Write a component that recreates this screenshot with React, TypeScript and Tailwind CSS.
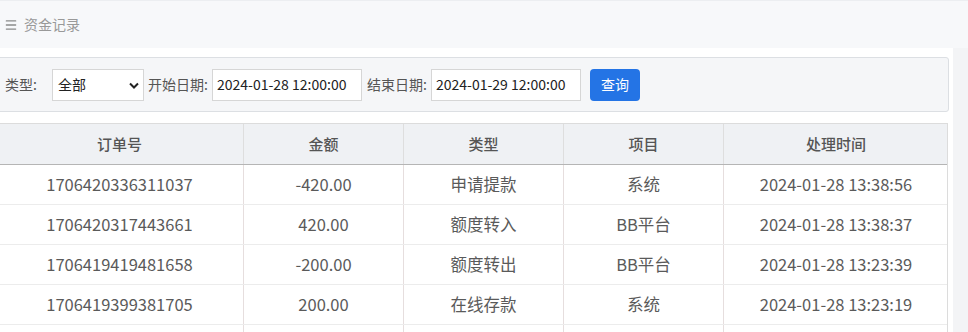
import React from "react";
import { Menu } from "lucide-react";

const rows = [
  { id: "1706420336311037", amount: "-420.00", type: "申请提款", item: "系统", time: "2024-01-28 13:38:56" },
  { id: "1706420317443661", amount: "420.00", type: "额度转入", item: "BB平台", time: "2024-01-28 13:38:37" },
  { id: "1706419419481658", amount: "-200.00", type: "额度转出", item: "BB平台", time: "2024-01-28 13:23:39" },
  { id: "1706419399381705", amount: "200.00", type: "在线存款", item: "系统", time: "2024-01-28 13:23:19" },
];

const font = { fontFamily: '"Noto Sans CJK SC", "Noto Sans", sans-serif' };

export default function App() {
  return (
    <div className="w-[968px] h-[332px] overflow-hidden bg-[#f3f4f6]" style={font}>
      <div className="h-[48px] flex items-center gap-[6px] pl-[4px] bg-[#f7f8fa] border-t border-[#eceef1]">
        <Menu className="w-[14px] h-[14px] text-[#8a8a8a]" strokeWidth={2.2} />
        <span className="text-[14px] text-[#999]">资金记录</span>
      </div>

      <div className="w-[953px] bg-white pt-[9px] pb-[12px]">
        <div className="ml-[-8px] w-[957px] h-[55px] flex items-center pl-[12px] bg-[#f5f6f8] border border-[#dcdfe3] rounded-[3px] text-[14px] text-[#555]">
          <span className="w-[47px]">类型:</span>
          <div className="relative w-[92px] h-[32px] bg-white border border-[#d6d6d6] flex items-center pl-[5px] text-[#222]">
            全部
            <svg className="absolute right-[4px] top-[12px]" width="10" height="7" viewBox="0 0 10 7">
              <path d="M1 1.5 L5 5.5 L9 1.5" fill="none" stroke="#222" strokeWidth="2" />
            </svg>
          </div>
          <span className="ml-[4px] w-[64px]">开始日期:</span>
          <div className="w-[150px] h-[32px] bg-white border border-[#d6d6d6] flex items-center pl-[4px] text-[#222]">
            2024-01-28 12:00:00
          </div>
          <span className="ml-[5px] w-[64px]">结束日期:</span>
          <div className="w-[150px] h-[32px] bg-white border border-[#d6d6d6] flex items-center pl-[4px] text-[#222]">
            2024-01-29 12:00:00
          </div>
          <button className="ml-[9px] w-[50px] h-[32px] rounded-[4px] bg-[#2474e5] text-white text-[14px]">
            查询
          </button>
        </div>

        <div className="ml-[-5px] mt-[11px] w-[953px] border border-[#dcdcdc] border-b-0">
          <div className="grid grid-cols-[248px_160px_160px_160px_224px] h-[41px] bg-[#eff1f4] border-b border-[#b5b5b5] text-[15px] font-medium text-[#555]">
            {["订单号", "金额", "类型", "项目", "处理时间"].map((h, i) => (
              <div key={h} className={"flex items-center justify-center " + (i < 4 ? "border-r border-[#dedede]" : "")}>
                {h}
              </div>
            ))}
          </div>
          {rows.map((r) => (
            <div key={r.id} className="grid grid-cols-[248px_160px_160px_160px_224px] h-[40px] border-b border-[#ececec] text-[16.5px] text-[#5a5a5a]">
              {[r.id, r.amount, r.type, r.item, r.time].map((c, i) => (
                <div key={i} className={"flex items-center justify-center " + (i < 4 ? "border-r border-[#e6dede]" : "")}>
                  {c}
                </div>
              ))}
            </div>
          ))}
          <div className="grid grid-cols-[248px_160px_160px_160px_224px] h-[40px]">
            {[0, 1, 2, 3, 4].map((i) => (
              <div key={i} className={i < 4 ? "border-r border-[#e6dede]" : ""} />
            ))}
          </div>
        </div>
      </div>
    </div>
  );
}
